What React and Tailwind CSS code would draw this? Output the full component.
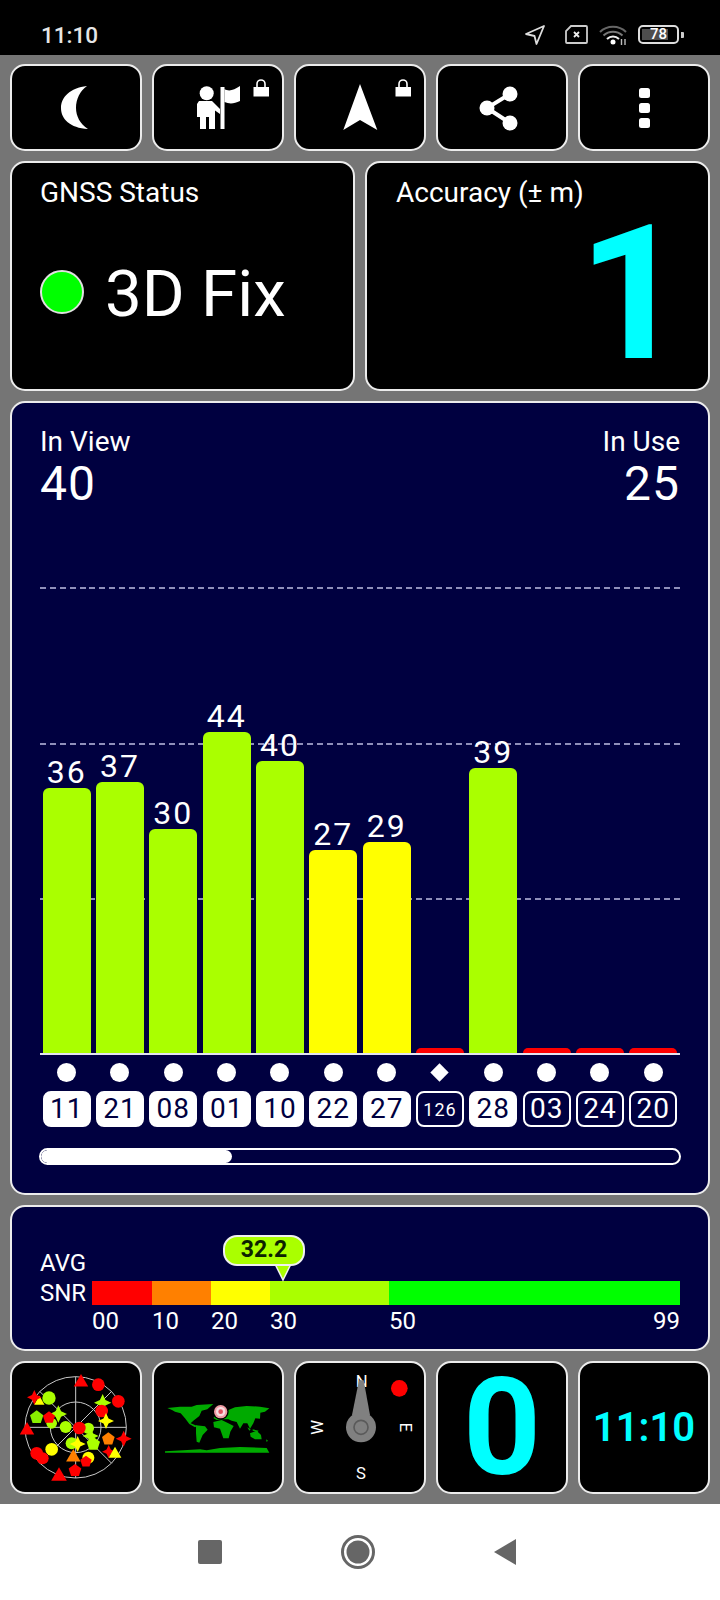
import React from 'react';

const bars = [
  { value: 36, height: 265, color: 'bg-[#aaff00]', id: '11', used: true },
  { value: 37, height: 271, color: 'bg-[#aaff00]', id: '21', used: true },
  { value: 30, height: 224, color: 'bg-[#aaff00]', id: '08', used: true },
  { value: 44, height: 321, color: 'bg-[#aaff00]', id: '01', used: true },
  { value: 40, height: 292, color: 'bg-[#aaff00]', id: '10', used: true },
  { value: 27, height: 203, color: 'bg-[#ffff00]', id: '22', used: true },
  { value: 29, height: 211, color: 'bg-[#ffff00]', id: '27', used: true },
  { value: null, height: 5, color: 'bg-[#ff0000]', id: '126', used: false, diamond: true },
  { value: 39, height: 285, color: 'bg-[#aaff00]', id: '28', used: true },
  { value: null, height: 5, color: 'bg-[#ff0000]', id: '03', used: false },
  { value: null, height: 5, color: 'bg-[#ff0000]', id: '24', used: false },
  { value: null, height: 5, color: 'bg-[#ff0000]', id: '20', used: false },
];

const LIME = '#aaff00';
const RED = '#ff0000';
const YEL = '#ffff00';
const ORG = '#ff8000';
const GRN = '#88ee00';

const ring = (cx, cy, r, n, inner) => {
  const pts = [];
  const count = inner ? n * 2 : n;
  for (let i = 0; i < count; i++) {
    const rad = inner && i % 2 ? inner : r;
    const a = -Math.PI / 2 + (i * 2 * Math.PI) / count;
    pts.push(`${(cx + rad * Math.cos(a)).toFixed(1)},${(cy + rad * Math.sin(a)).toFixed(1)}`);
  }
  return pts.join(' ');
};

// [shape, x, y, r, colour] in draw order
const sats = [
  ['c', 147, 174, 20, LIME],
  ['t', 118, 188, 14, YEL],
  ['s', 103, 172, 22, RED],
  ['p', 110, 232, 21, GRN],
  ['s', 175, 222, 26, LIME],
  ['c', 155, 250, 16, LIME],
  ['p', 147, 233, 19, RED],
  ['t', 243, 130, 21, RED],
  ['c', 295, 134, 19, RED],
  ['c', 355, 184, 19, RED],
  ['s', 308, 188, 26, LIME],
  ['c', 305, 213, 19, RED],
  ['s', 318, 243, 24, YEL],
  ['c', 197, 261, 18, LIME],
  ['c', 265, 265, 17, LIME],
  ['s', 272, 288, 24, LIME],
  ['p', 280, 312, 21, LIME],
  ['c', 238, 264, 19, RED],
  ['t', 81, 274, 21, RED],
  ['p', 325, 297, 20, ORG],
  ['s', 371, 296, 24, RED],
  ['c', 215, 310, 18, LIME],
  ['s', 233, 312, 24, YEL],
  ['c', 155, 328, 19, YEL],
  ['c', 110, 340, 19, RED],
  ['c', 128, 355, 18, RED],
  ['s', 326, 335, 20, RED],
  ['t', 345, 345, 18, YEL],
  ['c', 265, 353, 18, YEL],
  ['t', 220, 355, 21, ORG],
  ['p', 258, 365, 18, RED],
  ['p', 225, 392, 20, RED],
  ['t', 177, 412, 23, RED],
];

const Sat = ({ s }) => {
  const [shape, x, y, r, fill] = s;
  if (shape === 'c') return <circle cx={x} cy={y} r={r} fill={fill} />;
  if (shape === 't') return <polygon points={ring(x, y - 3, r + 4, 3)} fill={fill} />;
  if (shape === 'p') return <polygon points={ring(x, y, r, 5)} fill={fill} />;
  return <polygon points={ring(x, y, r, 4, r * 0.45)} fill={fill} />;
};

const Lock = () => (
  <g fill="none">
    <path d="M105 23 v-3 a4 4 0 0 1 8 0 v3" stroke="#fff" strokeWidth="1.6" />
    <rect x="101.5" y="23" width="15.5" height="9.5" fill="#fff" />
  </g>
);

const Card = ({ children, className }) => (
  <div className={`relative rounded-[15px] border-2 border-[#ececec] ${className}`}>{children}</div>
);

const ToolIcon = ({ children }) => (
  <svg viewBox="2 2 128 83" className="h-full w-full">
    {children}
  </svg>
);

const StatusBar = () => (
  <div className="flex h-[55px] shrink-0 items-center justify-between bg-black pl-[41px] pr-[36px] pt-[14px]">
    <span className="text-[22.5px] font-medium leading-[24px] text-[#e6e6e6]">11:10</span>
    <div className="flex items-center">
      <svg viewBox="0 0 20 20" className="h-[20px] w-[20px]" fill="none">
        <path d="M19 1 L1 9 L9.5 11 L11.5 19 Z" stroke="#ddd" strokeWidth="1.8" strokeLinejoin="round" />
      </svg>
      <svg viewBox="0 0 24 19" className="ml-[19px] h-[19px] w-[24px]" fill="none">
        <path d="M7 1 H22 a1 1 0 0 1 1 1 V17 a1 1 0 0 1 -1 1 H3 a1 1 0 0 1 -1 -1 V6 Z" stroke="#ccc" strokeWidth="1.8" />
        <path d="M10 7 L15 12 M15 7 L10 12" stroke="#eee" strokeWidth="1.8" />
      </svg>
      <svg viewBox="0 0 28 20" className="ml-[11px] h-[20px] w-[28px]" fill="none">
        <path d="M1 7 C8 0 20 0 27 7" stroke="#666" strokeWidth="2" />
        <path d="M4.5 10.5 C10 5.5 18 5.5 23.5 10.5" stroke="#777" strokeWidth="2" />
        <path d="M8 14 C11.5 10.5 16.5 10.5 20 14" stroke="#eee" strokeWidth="2" />
        <circle cx="14" cy="17" r="2.5" fill="#fff" />
        <path d="M22.5 14 v6 M26 14 v6" stroke="#bbb" strokeWidth="1.4" />
      </svg>
      <div className="relative ml-[11px] flex h-[19px] w-[41px] items-center justify-center rounded-[5px] border-2 border-[#ddd]">
        <div className="absolute bottom-[2px] left-[2px] top-[2px] w-[26px] bg-[#4d4d4d]" />
        <span className="relative text-[15px] font-medium leading-none text-white">78</span>
      </div>
      <div className="ml-[2px] h-[6px] w-[3px] rounded-r-[1px] bg-[#ccc]" />
    </div>
  </div>
);

const Toolbar = () => (
  <div className="grid h-[87px] shrink-0 grid-cols-5 gap-[10px]">
    <Card className="bg-black">
      <ToolIcon>
        <path d="M77 22 C60 24 51 33 51 44 C51 55 60 64 78 65 C70 60 66 52 66 44 C66 35 70 27 77 22 Z" fill="#fff" />
      </ToolIcon>
    </Card>
    <Card className="bg-black">
      <ToolIcon>
        <circle cx="54.7" cy="29.3" r="7" fill="#fff" />
        <path d="M47 37 H60 L68 45 V50 L63 46.5 V65 H57 V53 H54 V65 H48 V53 H45 V40 Z" fill="#fff" />
        <rect x="68.5" y="23" width="4" height="42" fill="#fff" />
        <path d="M72.5 25 C77 28 82 26 88 22 V37 C82 40 77 40 72.5 38 Z" fill="#fff" />
        <Lock />
      </ToolIcon>
    </Card>
    <Card className="bg-black">
      <ToolIcon>
        <path d="M66 20 L83.3 66 L66 56 L49.3 66 Z" fill="#fff" />
        <Lock />
      </ToolIcon>
    </Card>
    <Card className="bg-black">
      <ToolIcon>
        <path d="M74 30 L51 44 L74 59" stroke="#fff" strokeWidth="4" fill="none" />
        <circle cx="74" cy="30" r="7.5" fill="#fff" />
        <circle cx="51" cy="44" r="7.5" fill="#fff" />
        <circle cx="74" cy="59" r="7.5" fill="#fff" />
      </ToolIcon>
    </Card>
    <Card className="bg-black">
      <ToolIcon>
        <rect x="61" y="24" width="11" height="10" rx="2.5" fill="#fff" />
        <rect x="61" y="39" width="11" height="10" rx="2.5" fill="#fff" />
        <rect x="61" y="54" width="11" height="10" rx="2.5" fill="#fff" />
      </ToolIcon>
    </Card>
  </div>
);

const SummaryRow = () => (
  <div className="grid h-[230px] shrink-0 grid-cols-2 gap-[10px]">
    <Card className="bg-black px-[28px] pt-[14px]">
      <div className="text-[28px] leading-[32px] text-white">GNSS Status</div>
      <div className="mt-[53px] flex items-center gap-[21px]">
        <div className="mb-[5px] h-[44px] w-[44px] rounded-full border-2 border-[#e0e0e0] bg-[#00ff00]" />
        <span className="text-[65.5px] leading-[64px] text-white">3D Fix</span>
      </div>
    </Card>
    <Card className="bg-black pl-[29px] pr-[22px] pt-[14px]">
      <div className="text-[28px] leading-[32px] text-white">Accuracy (± m)</div>
      <div className="mt-[15px] text-right text-[188px] font-bold leading-[140px] text-[#00ffff]">1</div>
    </Card>
  </div>
);

const SatellitePanel = () => (
  <Card className="h-[794px] shrink-0 bg-[#000040] px-[28px] pt-[24px]">
    <div className="flex justify-between text-white">
      <div>
        <div className="text-[28px] leading-[30px]">In View</div>
        <div className="mt-[2px] text-[48px] leading-[50px] tracking-[1px]">40</div>
      </div>
      <div className="text-right">
        <div className="text-[28px] leading-[30px]">In Use</div>
        <div className="mt-[2px] text-[48px] leading-[50px] tracking-[1px]">25</div>
      </div>
    </div>

    <div className="relative mt-[1px] h-[543px]">
      <div className="absolute left-0 right-0 top-[77px] h-[2px] bg-[repeating-linear-gradient(90deg,#8f8fbb_0_6px,transparent_6px_9.9px)]" />
      <div className="absolute left-0 right-0 top-[233px] h-[2px] bg-[repeating-linear-gradient(90deg,#8f8fbb_0_6px,transparent_6px_9.9px)]" />
      <div className="absolute left-0 right-0 top-[388px] h-[2px] bg-[repeating-linear-gradient(90deg,#8f8fbb_0_6px,transparent_6px_9.9px)]" />
      <div className="relative grid h-full grid-cols-12 items-end">
        {bars.map((b) => (
          <div key={b.id} className="flex flex-col items-center">
            {b.value !== null && (
              <span className="text-[32px] leading-[32px] tracking-[2px] text-white">{b.value}</span>
            )}
            <div className={`w-[48px] rounded-t-[6px] ${b.color}`} style={{ height: b.height }} />
          </div>
        ))}
      </div>
    </div>
    <div className="h-[2px] bg-[#e4e4f0]" />

    <div className="mt-[8px] grid h-[19px] grid-cols-12">
      {bars.map((b) => (
        <div key={b.id} className="flex items-center justify-center">
          {b.diamond ? (
            <div className="h-[13px] w-[13px] rotate-45 bg-white" />
          ) : (
            <div className="h-[19px] w-[19px] rounded-full bg-white" />
          )}
        </div>
      ))}
    </div>

    <div className="mt-[9px] grid grid-cols-12">
      {bars.map((b) => (
        <div key={b.id} className="flex justify-center">
          <div
            className={`flex h-[36px] w-[48px] items-center justify-center rounded-[8px] border-2 border-white ${
              b.used ? 'bg-white text-[#000040]' : 'text-white'
            } ${b.id === '126' ? 'text-[18px] tracking-[1px]' : 'text-[28px] tracking-[1px]'}`}
          >
            {b.id}
          </div>
        </div>
      ))}
    </div>

    <div className="mx-[-1px] mt-[21px] h-[17px] overflow-hidden rounded-full border-2 border-white">
      <div className="h-full w-[191px] rounded-full bg-white" />
    </div>
  </Card>
);

const SnrPanel = () => (
  <Card className="h-[146px] shrink-0 bg-[#000040] px-[28px] pt-[41px] text-white">
    <div className="text-[24px] leading-[30px]">AVG</div>
    <div className="flex">
      <div className="w-[52px] shrink-0 text-[24px] leading-[30px]">SNR</div>
      <div className="mt-[3px] flex-1">
        <div className="flex h-[24px]">
          <div className="w-[60px] bg-[#ff0000]" />
          <div className="w-[59px] bg-[#ff8000]" />
          <div className="w-[59px] bg-[#ffff00]" />
          <div className="w-[119px] bg-[#aaff00]" />
          <div className="flex-1 bg-[#00ff00]" />
        </div>
        <div className="mt-[5px] flex text-[24px] leading-[22px]">
          <div className="w-[60px]">00</div>
          <div className="w-[59px]">10</div>
          <div className="w-[59px]">20</div>
          <div className="w-[119px]">30</div>
          <div className="flex flex-1 justify-between">
            <span>50</span>
            <span>99</span>
          </div>
        </div>
      </div>
    </div>

    {/* value bubble sits over the scale */}
    <svg viewBox="0 0 18 18" className="absolute left-[262px] top-[57px] h-[18px] w-[18px]">
      <path d="M1 0 L9 16 L17 0 Z" fill="#aaff00" />
      <path d="M1 0 L9 16 L17 0" fill="none" stroke="#f0f0f0" strokeWidth="1.5" />
    </svg>
    <div className="absolute left-[211px] top-[28px] flex h-[31px] w-[82px] items-center justify-center rounded-[14px] border-2 border-[#f0f0f0] bg-[#aaff00] text-[23px] font-bold text-[#0c2200]">
      32.2
    </div>
  </Card>
);

const Radar = () => (
  <svg viewBox="36 69 384 387" className="h-full w-full">
    <g fill="none" stroke="#c8c8c8" strokeWidth="3">
      <circle cx="227" cy="262" r="152" />
      <circle cx="227" cy="262" r="76" />
      <path d="M227 110 V414 M75 262 H379 M119 154 L335 370 M335 154 L119 370" />
    </g>
    {sats.map((s, i) => (
      <Sat key={i} s={s} />
    ))}
  </svg>
);

const WorldMap = () => (
  <svg viewBox="-18 -81 384 387" className="h-full w-full">
    <g fill="#00aa00">
      <path d="M22 54 L60 50 L95 50 L110 45 L160 42 L142 58 L125 62 L118 78 L100 92 L92 100 L112 108 L105 112 L88 102 L75 85 L62 70 L45 65 L36 60 Z" />
      <path d="M108 106 L135 109 L143 119 L128 135 L118 158 L110 155 L108 130 Z" />
      <path d="M160 84 L170 74 L200 62 L225 52 L260 48 L300 50 L328 55 L315 65 L301 68 L300 86 L286 85 L280 100 L270 116 L262 100 L250 100 L240 116 L230 96 L215 92 L205 88 L185 88 L170 90 Z" />
      <path d="M160 96 L185 90 L205 100 L221 108 L211 125 L206 145 L190 145 L180 116 L162 112 Z" />
      <path d="M270 130 L290 122 L303 135 L305 148 L285 148 L272 140 Z" />
      <path d="M262 112 L272 118 L268 122 Z M278 118 L296 122 L292 126 L278 122 Z M318 148 L324 152 L320 156 Z" />
      <path d="M15 184 L70 181 L120 178 L140 181 L180 174 L240 171 L320 174 L328 188 L15 188 Z" />
    </g>
    <circle cx="182" cy="65" r="24" fill="#000" />
    <circle cx="182" cy="65" r="20" fill="#ee9aa2" />
    <circle cx="182" cy="65" r="14" fill="#f6dce0" />
    <circle cx="182" cy="65" r="7" fill="#e0505e" />
  </svg>
);

const Compass = () => (
  <svg viewBox="0 -6 384 387" className="h-full w-full">
    <g fill="#fff" fontFamily="Roboto, sans-serif" fontSize="50" textAnchor="middle">
      <text x="197" y="67">N</text>
      <text x="195" y="343">S</text>
      <text transform="translate(80 187) rotate(-90)">W</text>
      <text transform="translate(313 187) rotate(90)">E</text>
    </g>
    <path d="M189 46 H203 L222 150 H168 Z" fill="#808080" />
    <circle cx="195" cy="187" r="45" fill="#808080" />
    <circle cx="195" cy="187" r="21" fill="none" stroke="#5a5a5a" strokeWidth="5" />
    <circle cx="310" cy="70" r="25" fill="#ff0000" />
  </svg>
);

const BottomRow = () => (
  <div className="grid h-[133px] shrink-0 grid-cols-5 gap-[10px]">
    <Card className="bg-black">
      <Radar />
    </Card>
    <Card className="bg-black">
      <WorldMap />
    </Card>
    <Card className="bg-black">
      <Compass />
    </Card>
    <Card className="flex items-center justify-center bg-black">
      <span className="text-[136px] font-bold leading-[120px] text-[#00ffff]">0</span>
    </Card>
    <Card className="flex items-center justify-center bg-black">
      <span className="text-[40px] font-semibold leading-none text-[#00ffff]">11:10</span>
    </Card>
  </div>
);

const NavBar = () => (
  <div className="flex flex-1 items-center gap-[119px] bg-white pl-[198px]">
    <div className="h-[24px] w-[24px] rounded-[2px] bg-[#666]" />
    <svg viewBox="0 0 34 34" className="h-[34px] w-[34px]">
      <circle cx="17" cy="17" r="15.5" fill="none" stroke="#666" strokeWidth="3" />
      <circle cx="17" cy="17" r="11.5" fill="#666" />
    </svg>
    <svg viewBox="0 0 22 26" className="h-[26px] w-[22px]">
      <path d="M0 13 L22 0 V26 Z" fill="#666" />
    </svg>
  </div>
);

const App = () => {
  return (
    <div className="flex h-[1600px] w-[720px] flex-col overflow-hidden font-[Roboto,sans-serif]">
      <StatusBar />
      <div className="flex shrink-0 flex-col gap-[10px] bg-[#757575] px-[10px] pb-[10px] pt-[9px]">
        <Toolbar />
        <SummaryRow />
        <SatellitePanel />
        <SnrPanel />
        <BottomRow />
      </div>
      <NavBar />
    </div>
  );
};

export default App;
